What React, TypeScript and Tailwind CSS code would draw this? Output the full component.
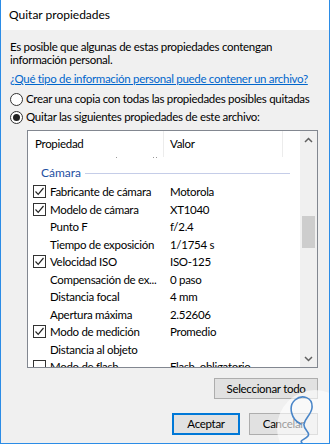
import React from "react";

type Row = { name: string; value: string; check?: boolean };

const rows: Row[] = [
  { name: "Fabricante de cámara", value: "Motorola", check: true },
  { name: "Modelo de cámara", value: "XT1040", check: true },
  { name: "Punto F", value: "f/2.4" },
  { name: "Tiempo de exposición", value: "1/1754 s" },
  { name: "Velocidad ISO", value: "ISO-125", check: true },
  { name: "Compensación de ex...", value: "0 paso" },
  { name: "Distancia focal", value: "4 mm" },
  { name: "Apertura máxima", value: "2.52606" },
  { name: "Modo de medición", value: "Promedio", check: true },
  { name: "Distancia al objeto", value: "" },
  { name: "Modo de flash", value: "Flash, obligatorio", check: false },
];

function Check({ on }: { on: boolean }) {
  return (
    <span className="w-[13px] h-[13px] border border-[#333] bg-white flex items-center justify-center shrink-0">
      {on && (
        <svg width="11" height="11" viewBox="0 0 11 11">
          <path d="M1.5 5.5 L4.2 8.3 L9.5 2" fill="none" stroke="#222" strokeWidth="1.2" />
        </svg>
      )}
    </span>
  );
}

function Radio({ on }: { on: boolean }) {
  return (
    <span className="w-[13px] h-[13px] rounded-full border border-[#333] bg-white flex items-center justify-center shrink-0">
      {on && <span className="w-[7px] h-[7px] rounded-full bg-[#222]" />}
    </span>
  );
}

export default function App() {
  return (
    <div
      className="w-[330px] h-[444px] bg-[#f0f0f0] border-x border-b border-[#2b8ce6] flex flex-col text-[11.5px] tracking-[-0.3px] text-black relative overflow-hidden"
      style={{ fontFamily: 'Lato, "Noto Sans", sans-serif' }}
    >
      {/* Title bar */}
      <div className="h-[30px] bg-white flex items-center pl-[8px] text-[12px] tracking-normal shrink-0">Quitar propiedades</div>

      <div className="flex flex-col pl-[9px] pr-[11px] pt-[10px]">
        <p className="leading-[13px]">
          Es posible que algunas de estas propiedades contengan
          <br />
          información personal.
        </p>
        <a className="mt-[6px] leading-[13px] text-[#0066cc] underline underline-offset-1 whitespace-nowrap">
          ¿Qué tipo de información personal puede contener un archivo?
        </a>

        <div className="mt-[5px] flex items-center gap-[3px] h-[18px] whitespace-nowrap">
          <Radio on={false} />
          <span>Crear una copia con todas las propiedades posibles quitadas</span>
        </div>
        <div className="flex items-center gap-[3px] h-[18px] whitespace-nowrap">
          <Radio on={true} />
          <span>Quitar las siguientes propiedades de este archivo:</span>
        </div>

        {/* List box */}
        <div className="ml-[17px] mt-[4px] h-[238px] border border-[#828790] bg-white flex overflow-hidden">
          <div className="flex-1 flex flex-col overflow-hidden">
            <div className="h-[26px] flex shrink-0">
              <div className="w-[136px] pl-[7px] flex items-center border-r border-[#ececec]">Propiedad</div>
              <div className="w-[119px] pl-[6px] flex items-center border-r border-[#ececec]">Valor</div>
            </div>
            <div className="h-[6px] shrink-0 relative">
              <span className="absolute left-[88px] top-0 w-[1px] h-[1px] bg-[#999]" />
              <span className="absolute left-[125px] top-0 w-[1px] h-[1px] bg-[#999]" />
              <span className="absolute left-[128px] top-0 w-[1px] h-[1px] bg-[#999]" />
            </div>
            <div className="h-[20px] flex items-center pl-[13px] pr-[10px] gap-[4px] shrink-0">
              <span className="text-[#1e50a2] text-[12px] tracking-normal">Cámara</span>
              <span className="flex-1 h-[1px] bg-[#c5cde8]" />
            </div>
            {rows.map((r) => (
              <div key={r.name} className="h-[17.5px] flex items-center shrink-0 whitespace-nowrap">
                <div className="w-[22px] pl-[5px] flex items-center">{r.check !== undefined && <Check on={r.check} />}</div>
                <div className="w-[120px]">{r.name}</div>
                <div>{r.value}</div>
              </div>
            ))}
          </div>
          {/* Scrollbar */}
          <div className="w-[17px] bg-[#f0f0f0] flex flex-col items-center shrink-0">
            <div className="h-[17px] flex items-center justify-center">
              <svg width="9" height="6" viewBox="0 0 9 6">
                <path d="M1 5 L4.5 1.5 L8 5" fill="none" stroke="#606060" strokeWidth="1.5" />
              </svg>
            </div>
            <div className="mt-[68px] w-[13px] h-[32px] bg-[#cdcdcd]" />
            <div className="flex-1" />
            <div className="h-[17px] flex items-center justify-center">
              <svg width="9" height="6" viewBox="0 0 9 6">
                <path d="M1 1 L4.5 4.5 L8 1" fill="none" stroke="#606060" strokeWidth="1.5" />
              </svg>
            </div>
          </div>
        </div>

        <div className="flex justify-end mt-[10px]">
          <button className="w-[104px] h-[21px] bg-[#e1e1e1] border border-[#adadad]">Seleccionar todo</button>
        </div>
        <div className="flex justify-end gap-[9px] mt-[14px]">
          <button className="w-[68px] h-[22px] bg-[#e1e1e1] border-2 border-[#0078d7]">Aceptar</button>
          <button className="w-[69px] h-[22px] bg-[#e1e1e1] border border-[#adadad]">Cancelar</button>
        </div>
      </div>

      {/* Watermark */}
      <svg className="absolute left-[268px] top-[380px] pointer-events-none" width="62" height="64" viewBox="0 0 62 64">
        <circle cx="46" cy="48" r="38" fill="white" fillOpacity="0.6" />
        <path
          d="M32 44 C22 40 19 26 26 20 C33 14 44 17 43 28 C42 35 36 38 35 44 C34 50 42 52 39 56 C36 60 30 60 33 63"
          fill="none"
          stroke="#4a86c8"
          strokeWidth="1.6"
          strokeLinecap="round"
        />
      </svg>
    </div>
  );
}
